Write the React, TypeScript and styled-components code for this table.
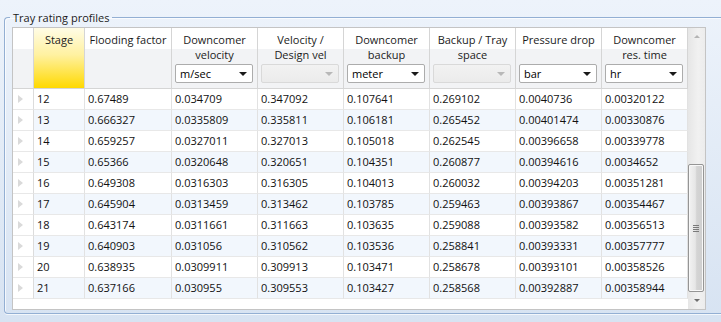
import React from "react";
import styled, { createGlobalStyle } from "styled-components";

interface Column {
  title: string[];
  unit?: string;
  disabled?: boolean;
  combo: boolean;
}

const columns: Column[] = [
  { title: ["Flooding factor"], combo: false },
  { title: ["Downcomer", "velocity"], unit: "m/sec", combo: true },
  { title: ["Velocity /", "Design vel"], disabled: true, combo: true },
  { title: ["Downcomer", "backup"], unit: "meter", combo: true },
  { title: ["Backup / Tray", "space"], disabled: true, combo: true },
  { title: ["Pressure drop"], unit: "bar", combo: true },
  { title: ["Downcomer", "res. time"], unit: "hr", combo: true },
];

const rows: string[][] = [
  ["12", "0.67489", "0.034709", "0.347092", "0.107641", "0.269102", "0.0040736", "0.00320122"],
  ["13", "0.666327", "0.0335809", "0.335811", "0.106181", "0.265452", "0.00401474", "0.00330876"],
  ["14", "0.659257", "0.0327011", "0.327013", "0.105018", "0.262545", "0.00396658", "0.00339778"],
  ["15", "0.65366", "0.0320648", "0.320651", "0.104351", "0.260877", "0.00394616", "0.0034652"],
  ["16", "0.649308", "0.0316303", "0.316305", "0.104013", "0.260032", "0.00394203", "0.00351281"],
  ["17", "0.645904", "0.0313459", "0.313462", "0.103785", "0.259463", "0.00393867", "0.00354467"],
  ["18", "0.643174", "0.0311661", "0.311663", "0.103635", "0.259088", "0.00393582", "0.00356513"],
  ["19", "0.640903", "0.031056", "0.310562", "0.103536", "0.258841", "0.00393331", "0.00357777"],
  ["20", "0.638935", "0.0309911", "0.309913", "0.103471", "0.258678", "0.00393101", "0.00358526"],
  ["21", "0.637166", "0.030955", "0.309553", "0.103427", "0.258568", "0.00392887", "0.00358944"],
];

const App: React.FC = () => {
  return (
    <>
      <GlobalStyle />
      <GroupBox>
        <Legend>Tray rating profiles</Legend>
        <Grid>
          <Table>
            <CornerCell />
            <HeaderCell $highlight>
              <HeaderLabel>Stage</HeaderLabel>
            </HeaderCell>
            {columns.map((col, i) => (
              <HeaderCell key={i}>
                <HeaderLabel>
                  {col.title.map((line, j) => (
                    <div key={j}>{line}</div>
                  ))}
                </HeaderLabel>
                {col.combo && (
                  <Combo $disabled={col.disabled}>
                    <span>{col.unit}</span>
                    <ComboArrow $disabled={col.disabled} />
                  </Combo>
                )}
              </HeaderCell>
            ))}
            {rows.map((row, r) => (
              <React.Fragment key={r}>
                <RowHeader>
                  <RowMarker />
                </RowHeader>
                {row.map((value, c) => (
                  <Cell key={c} $alt={r % 2 === 1}>
                    {value}
                  </Cell>
                ))}
              </React.Fragment>
            ))}
          </Table>
          <ScrollBar>
            <ScrollButton>
              <ScrollArrow $up />
            </ScrollButton>
            <ScrollSpace />
            <Thumb>
              <Grip>
                <span />
                <span />
                <span />
                <span />
              </Grip>
            </Thumb>
            <ScrollButton>
              <ScrollArrow />
            </ScrollButton>
          </ScrollBar>
        </Grid>
      </GroupBox>
    </>
  );
};

export default App;

const GlobalStyle = createGlobalStyle`
  html, body {
    margin: 0;
    height: 322px;
    overflow: hidden;
  }
  body {
    background: linear-gradient(#edf3fb, #d7e3f2);
    font-family: "Open Sans", "Noto Sans", sans-serif;
    font-size: 11px;
    color: #1b1b1b;
  }
`;

// group box runs off the right edge of the window, so no right border
const GroupBox = styled.fieldset`
  box-sizing: border-box;
  height: 304px;
  margin: 10px 0 0 4px;
  padding: 2px 0 0 7px;
  border: 1px solid #93afd3;
  border-right: none;
  border-radius: 4px 0 0 4px;
  box-shadow: inset 1px 1px 0 rgba(255, 255, 255, 0.7),
    0 1px 0 rgba(255, 255, 255, 0.7);
  min-width: 0;
`;

const Legend = styled.legend`
  margin-left: -2px;
  padding: 0 3px;
  line-height: 15px;
  color: #1b1b1b;
`;

const Grid = styled.div`
  display: flex;
  width: 692px;
  height: 281px;
  border: 1px solid #c4c4c4;
  background: #fff;
`;

const Table = styled.div`
  display: grid;
  grid-template-columns: 21px 51px 87px repeat(6, 86px);
  grid-template-rows: 61px;
  grid-auto-rows: 21px;
  align-content: start;
  width: 675px;
  background: #fff;
`;

const CornerCell = styled.div`
  border-right: 1px solid #d5d5d5;
  border-bottom: 1px solid #d5d5d5;
  background: linear-gradient(#ffffff 0%, #ffffff 35%, #f2f3f5 35%, #f2f3f5 100%);
`;

const HeaderCell = styled.div<{ $highlight?: boolean }>`
  box-sizing: border-box;
  display: flex;
  flex-direction: column;
  border-right: 1px solid #d5d5d5;
  border-bottom: 1px solid #d5d5d5;
  padding: 4px 0 5px;
  background: ${({ $highlight }) =>
    $highlight
      ? "linear-gradient(#fffce6, #fff1a0 45%, #ffd900)"
      : "linear-gradient(#ffffff 0%, #ffffff 35%, #f2f3f5 35%, #f2f3f5 100%)"};
`;

const HeaderLabel = styled.div`
  text-align: center;
  line-height: 15px;
  white-space: nowrap;
  overflow: hidden;
  color: #1b1b1b;
`;

const Combo = styled.div<{ $disabled?: boolean }>`
  box-sizing: border-box;
  display: flex;
  align-items: center;
  justify-content: space-between;
  height: 19px;
  margin: auto 4px 0 3px;
  padding: 0 5px 0 4px;
  border: 1px solid ${({ $disabled }) => ($disabled ? "#d9d9d9" : "#acacac")};
  border-radius: 2px;
  background: ${({ $disabled }) =>
    $disabled ? "linear-gradient(#f2f2f2, #ebebeb)" : "#fff"};
  color: #000;
  font-size: 11px;
`;

const ComboArrow = styled.span<{ $disabled?: boolean }>`
  width: 0;
  height: 0;
  border-left: 4px solid transparent;
  border-right: 4px solid transparent;
  border-top: 4px solid ${({ $disabled }) => ($disabled ? "#b8b8b8" : "#1a1a1a")};
`;

const RowHeader = styled.div`
  box-sizing: border-box;
  display: flex;
  align-items: center;
  padding-left: 5px;
  border-right: 1px solid #dcdcdc;
  border-bottom: 1px solid #e8e8e8;
  background: #fff;
`;

const RowMarker = styled.span`
  width: 0;
  height: 0;
  border-top: 4px solid transparent;
  border-bottom: 4px solid transparent;
  border-left: 5px solid #dadada;
`;

const Cell = styled.div<{ $alt: boolean }>`
  box-sizing: border-box;
  padding: 0 0 0 3px;
  line-height: 20px;
  white-space: nowrap;
  overflow: hidden;
  border-right: 1px solid #e2e2e2;
  border-bottom: 1px solid #e8e8e8;
  background: ${({ $alt }) => ($alt ? "#f2f7fd" : "#fff")};
  color: #111;
`;

const ScrollBar = styled.div`
  display: flex;
  flex-direction: column;
  width: 17px;
  background: linear-gradient(90deg, #e6e6e6, #f1f1f1 60%, #ececec);
`;

const ScrollButton = styled.div`
  height: 17px;
  display: flex;
  align-items: center;
  justify-content: center;
`;

const ScrollArrow = styled.span<{ $up?: boolean }>`
  width: 0;
  height: 0;
  border-left: 3px solid transparent;
  border-right: 3px solid transparent;
  ${({ $up }) =>
    $up
      ? "border-bottom: 3px solid #b4b4b4;"
      : "border-top: 3px solid #6e6e6e;"}
`;

const ScrollSpace = styled.div`
  flex: 1;
`;

const Thumb = styled.div`
  box-sizing: border-box;
  height: 128px;
  margin: 0 1px 0 0;
  border: 1px solid #959595;
  border-radius: 2px;
  box-shadow: inset 0 0 0 1px #f8f8f8;
  background: linear-gradient(90deg, #f2f2f2, #e6e6e6 45%, #d4d4d4 55%, #cfcfcf);
  display: flex;
  align-items: center;
  justify-content: center;
`;

const Grip = styled.div`
  display: flex;
  flex-direction: column;
  gap: 1px;

  span {
    display: block;
    width: 6px;
    height: 1px;
    background: #7a7a7a;
  }
`;
